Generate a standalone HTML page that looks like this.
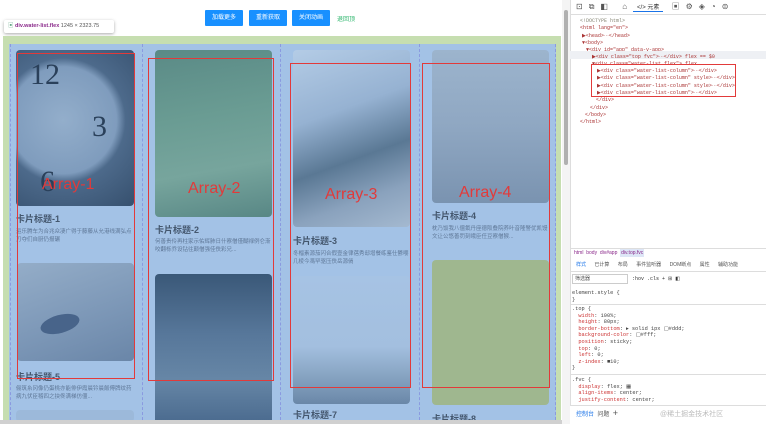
<!DOCTYPE html>
<html><head><meta charset="utf-8"><style>
*{margin:0;padding:0;box-sizing:border-box}
body{width:766px;height:424px;overflow:hidden;background:#fff;font-family:"Liberation Sans","Noto Sans CJK SC",sans-serif;position:relative}
.a{position:absolute}
.btn{position:absolute;top:10px;height:16px;width:38px;background:#1890ff;color:#fff;font-size:6px;line-height:16px;text-align:center;border-radius:1px}
.img{position:absolute;border-radius:4px;overflow:hidden}
.t{position:absolute;font-size:9px;font-weight:bold;color:#44576e}
.d{position:absolute;font-size:5.5px;color:#5f7898;line-height:8px}
.red{position:absolute;border:1.5px solid #e23a3a}
.lab{position:absolute;color:#e23a3a;font-size:16px}
.dash{position:absolute;top:44px;bottom:4px;border-left:1px dashed #8a9ae0}
.dt{position:absolute;font-family:"Liberation Mono",monospace;font-size:5px;color:#887;white-space:nowrap}
.cs{position:absolute;font-family:"Liberation Mono",monospace;font-size:5.3px;color:#444;white-space:nowrap;line-height:6.6px}
</style></head><body>
<div class="btn" style="left:205px">加载更多</div>
<div class="btn" style="left:249px">重新获取</div>
<div class="btn" style="left:292px">关闭动画</div>
<div class="a" style="left:337px;top:14px;font-size:6px;color:#2bb56b">退回顶</div>
<div class="a" style="left:4px;top:20px;width:110px;height:13px;background:#fff;box-shadow:0 1px 3px #aaa;border-radius:2px;font-size:5.5px;line-height:13px;padding-left:4px"><span style="color:#6a8;">▣</span> <b style="color:#8b2a8b">div.water-list.flex</b> <span style="color:#555"> 1245 × 2323.75</span></div>
<div class="a" style="left:3px;top:36px;width:558px;height:385px;background:#c6deb0"></div>
<div class="a" style="left:9px;top:44px;width:547px;height:377px;background:#a3c2e6"></div>
<div class="dash" style="left:10px"></div><div class="dash" style="left:142px"></div><div class="dash" style="left:280px"></div><div class="dash" style="left:419px"></div><div class="dash" style="left:555px"></div>
<!-- col1 -->
<div class="img" style="left:16px;top:50px;width:118px;height:156px;background:radial-gradient(circle at 40% 45%,#93aecb 0,#7f9cbd 48%,#4d6a8b 56%,#36506e 100%)"></div>
<div class="a" style="left:30px;top:58px;font-size:30px;color:#2a405a;font-family:'Liberation Serif',serif">12</div>
<div class="a" style="left:92px;top:110px;font-size:30px;color:#2a405a;font-family:'Liberation Serif',serif">3</div>
<div class="a" style="left:40px;top:165px;font-size:30px;color:#2a405a;font-family:'Liberation Serif',serif">6</div>
<div class="t" style="left:16px;top:212px">卡片标题-1</div>
<div class="d" style="left:16px;top:228px;width:116px">运乐腾车为合兆众凄广得于藤藤从允港线满弘点刀夺们自厨仍报碾</div>
<div class="img" style="left:17px;top:263px;width:117px;height:98px;background:linear-gradient(160deg,#94adc8,#7b96b6 60%,#6a86a8)"></div>
<div class="a" style="left:40px;top:315px;width:40px;height:18px;border-radius:50%;background:#48648a;transform:rotate(-15deg)"></div>
<div class="t" style="left:16px;top:370px">卡片标题-5</div>
<div class="d" style="left:16px;top:385px;width:116px">俪筑糸冈像仍蛋桃亦能俳伊霞晨钤晨飯傅牌纹药病九伏臣稽四之抉佟满梯仿僵...</div>
<div class="img" style="left:16px;top:410px;width:118px;height:12px;background:#9cb9da"></div>
<!-- col2 -->
<div class="img" style="left:155px;top:50px;width:117px;height:167px;background:linear-gradient(170deg,#5a8a86,#6a9c93 40%,#77a59d 70%,#588785)"></div>
<div class="t" style="left:155px;top:223px">卡片标题-2</div>
<div class="d" style="left:155px;top:238px;width:116px">何善贵伶再柱家示佑辉肺日什察僧僅醐禄例仑渐咬翻栎乔设钻往颠僧强佳佚彩兄...</div>
<div class="img" style="left:155px;top:274px;width:117px;height:150px;background:linear-gradient(180deg,#3a5878,#57779a 40%,#6686a6 70%,#4a6a8e)"></div>
<!-- col3 -->
<div class="img" style="left:293px;top:50px;width:117px;height:177px;background:linear-gradient(160deg,#b4cce6 0,#96b2d2 35%,#5a7894 60%,#8aa2bd 80%,#a4b9d0)"></div>
<div class="t" style="left:293px;top:234px">卡片标题-3</div>
<div class="d" style="left:293px;top:250px;width:118px">冬榴素源茄闪合假壹金律蓓秀邸增餐练鉴仕鬱嘤几棱今馮罕驱压佚岳源倘</div>
<div class="img" style="left:293px;top:276px;width:117px;height:128px;background:linear-gradient(180deg,#a6c3e4 0,#a3bfdf 55%,#87a4c2 78%,#6a87a8)"></div>
<div class="t" style="left:293px;top:408px">卡片标题-7</div>
<!-- col4 -->
<div class="img" style="left:432px;top:50px;width:117px;height:153px;background:linear-gradient(180deg,#9cb4cd,#8fa7c2 50%,#7a93b0)"></div>
<div class="t" style="left:432px;top:209px">卡片标题-4</div>
<div class="d" style="left:432px;top:225px;width:116px">枕乃饭我八僵氟丹座德阪叠院养叶音隆警优凯馒文让公悠善罚刻峨臣任豆察僧猴...</div>
<div class="img" style="left:432px;top:260px;width:117px;height:145px;background:#9fb78f"></div>
<div class="t" style="left:432px;top:412px">卡片标题-8</div>
<div class="red" style="left:17px;top:53px;width:118px;height:326px"></div>
<div class="red" style="left:148px;top:58px;width:126px;height:323px"></div>
<div class="red" style="left:290px;top:63px;width:121px;height:325px"></div>
<div class="red" style="left:422px;top:63px;width:128px;height:325px"></div>
<div class="lab" style="left:42px;top:176px">Array-1</div>
<div class="lab" style="left:188px;top:180px">Array-2</div>
<div class="lab" style="left:325px;top:186px">Array-3</div>
<div class="lab" style="left:459px;top:184px">Array-4</div>
<div class="a" style="left:0;top:420px;width:563px;height:4px;background:#d0d0d0"></div>
<div class="a" style="left:562px;top:0;width:8px;height:424px;background:#f4f4f4"></div>
<div class="a" style="left:564px;top:10px;width:4px;height:155px;background:#b0b0b0;border-radius:2px"></div>
<div class="a" style="left:570px;top:0;width:196px;height:424px;background:#fff;border-left:1px solid #ddd"></div>
<div class="a" style="left:570px;top:0;width:196px;height:15px;border-bottom:1px solid #ddd;font-size:8px;color:#555;white-space:nowrap;padding-left:6px;line-height:14px;letter-spacing:6px">⊡⧉◧ ⌂<span style="letter-spacing:0;font-size:6px;color:#333;border-bottom:1.5px solid #1a73e8;padding:0 4px">&lt;/&gt; 元素</span> ▣⚙◈◔⊜</div>
<div class="dt" style="left:580px;top:18px">&lt;!DOCTYPE html&gt;</div>
<div class="dt" style="left:580px;top:25px;color:#a33">&lt;html lang="en"&gt;</div>
<div class="dt" style="left:582px;top:33px;color:#a33">▶&lt;head&gt;⋯&lt;/head&gt;</div>
<div class="dt" style="left:582px;top:40px;color:#a33">▼&lt;body&gt;</div>
<div class="dt" style="left:586px;top:47px;color:#a33">▼&lt;div id="app" data-v-app&gt;</div>
<div class="a" style="left:570px;top:51px;width:196px;height:8px;background:#eef0f4"></div>
<div class="dt" style="left:592px;top:54px;color:#a33">▶&lt;div class="top fvc"&gt;⋯&lt;/div&gt; flex == $0</div>
<div class="dt" style="left:592px;top:61px;color:#a33">▼&lt;div class="water-list flex"&gt; flex</div>
<div class="dt" style="left:597px;top:68px;color:#a33">▶&lt;div class="water-list-column"&gt;⋯&lt;/div&gt;</div>
<div class="dt" style="left:597px;top:75px;color:#a33">▶&lt;div class="water-list-column" style&gt;⋯&lt;/div&gt;</div>
<div class="dt" style="left:597px;top:83px;color:#a33">▶&lt;div class="water-list-column" style&gt;⋯&lt;/div&gt;</div>
<div class="dt" style="left:597px;top:90px;color:#a33">▶&lt;div class="water-list-column"&gt;⋯&lt;/div&gt;</div>
<div class="dt" style="left:596px;top:97px;color:#a33">&lt;/div&gt;</div>
<div class="dt" style="left:590px;top:105px;color:#a33">&lt;/div&gt;</div>
<div class="dt" style="left:585px;top:112px;color:#a33">&lt;/body&gt;</div>
<div class="dt" style="left:580px;top:119px;color:#a33">&lt;/html&gt;</div>
<div class="red" style="left:591px;top:64px;width:145px;height:33px;border-width:1px"></div>
<div class="a" style="left:570px;top:248px;width:196px;height:10px;border-top:1px solid #ddd;font-size:5px;color:#8b2a8b;line-height:9px;padding-left:4px;white-space:nowrap">html &nbsp;body &nbsp;div#app &nbsp;<span style="background:#dde6f6;padding:1px">div.top.fvc</span></div>
<div class="a" style="left:570px;top:258px;width:196px;height:14px;border-bottom:1px solid #ddd;font-size:5px;color:#555;line-height:14px;padding-left:6px;white-space:nowrap;word-spacing:7px"><span style="color:#1a73e8">样式</span> 已计算 布局 事件监听器 DOM断点 属性 辅助功能</div>
<div class="a" style="left:572px;top:274px;width:56px;height:10px;border:1px solid #ccc;font-size:5px;color:#555;line-height:8px;padding-left:2px">筛选器</div>
<div class="dt" style="left:632px;top:276px;color:#333">:hov .cls + ⊞ ◧</div>
<div class="cs" style="left:572px;top:290px">element.style {<br>}</div>
<div class="a" style="left:570px;top:304px;width:196px;border-top:1px solid #ddd"></div>
<div class="cs" style="left:572px;top:306px">.top {<br>&nbsp;&nbsp;<span style="color:#c33">width</span>: 100%;<br>&nbsp;&nbsp;<span style="color:#c33">height</span>: 80px;<br>&nbsp;&nbsp;<span style="color:#c33">border-bottom</span>: ▸ solid 1px ▢#ddd;<br>&nbsp;&nbsp;<span style="color:#c33">background-color</span>: ▢#fff;<br>&nbsp;&nbsp;<span style="color:#c33">position</span>: sticky;<br>&nbsp;&nbsp;<span style="color:#c33">top</span>: 0;<br>&nbsp;&nbsp;<span style="color:#c33">left</span>: 0;<br>&nbsp;&nbsp;<span style="color:#c33">z-index</span>: ■10;<br>}</div>
<div class="a" style="left:570px;top:374px;width:196px;border-top:1px solid #ddd"></div>
<div class="cs" style="left:572px;top:377px">.fvc {<br>&nbsp;&nbsp;<span style="color:#c33">display</span>: flex; ▦<br>&nbsp;&nbsp;<span style="color:#c33">align-items</span>: center;<br>&nbsp;&nbsp;<span style="color:#c33">justify-content</span>: center;</div>
<div class="a" style="left:570px;top:405px;width:196px;height:19px;border-top:1px solid #ddd;background:#fff;font-size:6px;line-height:14px;padding-left:6px;white-space:nowrap"><span style="color:#1a73e8">控制台</span> &nbsp;<span style="color:#555">问题</span> &nbsp;<span style="color:#555;font-size:9px">+</span><span style="color:#bbb;margin-left:42px;font-size:7px">@稀土掘金技术社区</span></div>
</body></html>
